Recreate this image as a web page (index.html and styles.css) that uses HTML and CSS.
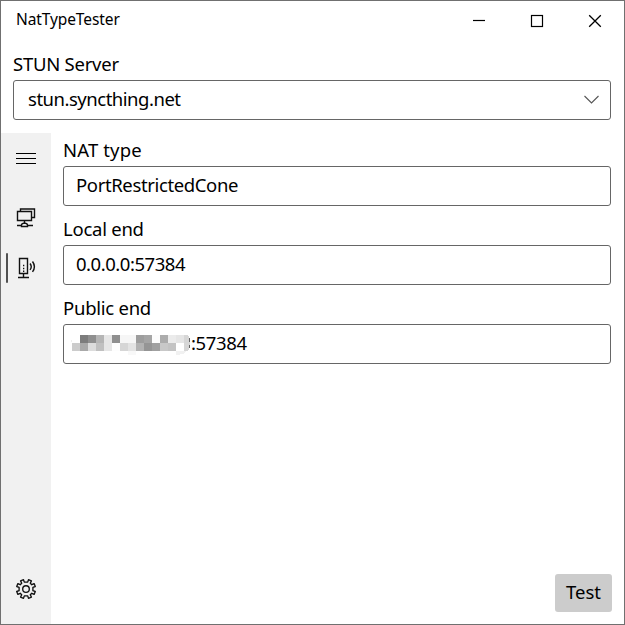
FILE: index.html
```
<!DOCTYPE html>
<html lang="en">
<head>
<meta charset="utf-8">
<title>NatTypeTester</title>
<link rel="stylesheet" href="styles.css">
</head>
<body>
<div class="window">
  <header class="titlebar">
    <span class="title">NatTypeTester</span>
    <svg class="controls" width="174" height="39" viewBox="0 0 174 39" fill="none" stroke="#000">
      <path d="M23 19.5h12" stroke-width="1.2"/>
      <rect x="81.5" y="14.5" width="11" height="11" stroke-width="1.2"/>
      <path d="M139.200 14.200l11.600 11.600M150.800 14.200l-11.600 11.600" stroke-width="1.3"/>
    </svg>
  </header>
  <section class="server">
    <label class="label l-server">STUN Server</label>
    <div class="box combo"><span class="t-server">stun.syncthing.net</span>
      <svg width="16" height="10" viewBox="0 0 16 10" fill="none" stroke="#555" stroke-width="1.1"><path d="M1.500 1l7 7 7-7"/></svg>
    </div>
  </section>
  <div class="body">
    <nav class="rail">
      <div class="item menu"><svg width="20" height="12" viewBox="0 0 20 12" stroke="#000" stroke-width="1.1"><path d="M0 .5h20M0 5.5h20M0 10.5h20"/></svg></div>
      <div class="item">
        <svg width="20" height="20" viewBox="0 0 20 20" fill="none" stroke="#111" stroke-width="1.4"><path d="M4.500 3.500v-2.500h14v8.500h-2.500M1.500 3.500h14v9h-14zM8.500 12.500v2.500M1 17.500h5M12 17.500h5M5.500 17q0-1.500 3-2 3 .5 3 2v1.500h-6z"/></svg>
      </div>
      <div class="item selected">
        <svg width="20" height="22" viewBox="0 0 20 22" fill="none" stroke="#111" stroke-width="1.4"><path d="M3.500 1.500h8v15h-8zM7.500 16.500v4M2 20.500h11M14 6.500q2.500 3.200 0 6.400M16.500 4.500q3.800 5.200 0 10.400"/><path d="M7 8.500h1.300M7 11.500h1.300M7 14.200h1.300"/></svg>
      </div>
      <div class="item settings">
        <svg width="20" height="20" viewBox="0 0 20 20" fill="none" stroke="#111" stroke-width="1.35" stroke-linejoin="round"><path d="M8.300 3.100L7.500.7 4.600 1.900 5.700 4.200 4.200 5.700 1.900 4.600.7 7.500 3.100 8.300v3.400L.7 12.500l1.200 2.900 2.300-1.100 1.500 1.500-1.100 2.300 2.900 1.200.8-2.400h3.400l.8 2.400 2.900-1.200-1.100-2.300 1.500-1.500 2.300 1.100 1.200-2.900-2.400-.8V8.300l2.400-.8-1.200-2.900-2.300 1.100-1.500-1.500 1.100-2.300L12.500.7l-.8 2.400z"/><circle cx="10" cy="10" r="3.300"/></svg>
      </div>
    </nav>
    <main class="content">
      <label class="label l-nat">NAT type</label>
      <div class="box"><span class="t-nat">PortRestrictedCone</span></div>
      <label class="label l-local">Local end</label>
      <div class="box"><span class="t-local">0.0.0.0:57384</span></div>
      <label class="label l-public">Public end</label>
      <div class="box public">
        <svg class="mosaic" width="120" height="20" viewBox="0 0 120 20" shape-rendering="crispEdges">
          <path fill="#eee" d="M0 5l1-1v3H0z"/>
          <path fill="#7c7c7c" d="M9 0h8v8H9z"/><path fill="#8f8f8f" d="M17 0h8v8h-8zM41 0h8v8h-8z"/><path fill="#b5b5b5" d="M25 0h8v8h-8z"/><path fill="#e6e6e6" d="M33 0h8v16h-8z"/><path fill="#f6f6f6" d="M49 0h16v8H49z"/><path fill="#9d9d9d" d="M65 0h8v8h-8z"/><path fill="#a5a5a5" d="M73 0h8v8h-8z"/><path fill="#fcfcfc" d="M81 0h8v8h-8z"/><path fill="#acacac" d="M89 0h8v8h-8z"/><path fill="#ebebeb" d="M97 0h8v8h-8z"/><path fill="#e5e5e5" d="M105 0h8v8h-8z"/><path fill="#d6d6d6" d="M113 0h4l2 4v8l-2 4h-4z"/>
          <path fill="#ccc" d="M1 8h8v8H1z"/><path fill="#a9a9a9" d="M9 8h8v8H9z"/><path fill="#dcdcdc" d="M17 8h8v8h-8z"/><path fill="#c0c0c0" d="M25 8h8v8h-8z"/><path fill="#fdfdfd" d="M41 8h8v8h-8z"/><path fill="#d6d6d6" d="M49 8h8v8h-8z"/><path fill="#e3e3e3" d="M57 8h8v8h-8z"/><path fill="#b2b2b2" d="M65 8h8v8h-8z"/><path fill="#959595" d="M73 8h8v8h-8z"/><path fill="#a0a0a0" d="M81 8h8v8h-8z"/><path fill="#c8c8c8" d="M89 8h8v8h-8z"/><path fill="#c3c3c3" d="M97 8h8v8h-8z"/>
          <path fill="#f8f8f8" d="M57 16h8v4h-8z"/><path fill="#f1f1f1" d="M105 16h11l-4 3-7 1z"/><path fill="#666" d="M118 3h1v4h-1zM118 10h1v3h-1z"/>
        </svg>
        <span class="t-public">:57384</span>
      </div>
      <button class="test"><span>Test</span></button>
    </main>
  </div>
</div>
</body>
</html>
```

FILE: styles.css
```
* { box-sizing: border-box; }
body { margin: 0; background: #fff; color: #000; font: 18.5px/24px "Noto Sans", "Open Sans", sans-serif; }
.window { width: 625px; height: 625px; border: 1px solid #707070; display: flex; flex-direction: column; overflow: hidden; }
.titlebar { height: 49px; display: flex; justify-content: space-between; align-items: flex-start; padding-left: 15px; }
.title { font-size: 15.5px; line-height: 20px; padding-top: 8px; letter-spacing: -0.1px; }
.controls { margin-right: 0; }
svg { display: block; flex: none; }
.server { height: 83px; padding: 2px 13px 0 12px; }
.label { display: block; width: max-content; height: 28px; white-space: nowrap; }
.box { height: 40px; border: 1px solid #666; border-radius: 3px; display: flex; align-items: center; padding: 0 12px; white-space: nowrap; }
.box > span { position: relative; top: -1px; }
.combo { justify-content: space-between; padding: 0 11px 0 14px; }
.body { flex: 1; display: flex; min-height: 0; }
.rail { width: 50px; background: #f1f1f1; display: flex; flex-direction: column; }
.item { height: 50px; display: flex; align-items: center; justify-content: center; flex: none; }
.menu { height: 60px; padding-bottom: 9px; }
.selected { position: relative; }
.selected::before { content: ""; position: absolute; left: 5px; top: 10px; width: 2px; height: 30px; background: #505050; border-radius: 1px; }
.settings { margin-top: auto; margin-bottom: 10px; }
.content { flex: 1; padding: 5px 13px 12px 12px; display: flex; flex-direction: column; }
.content .box + .label { margin-top: 11px; }
.public { padding-left: 7px; }
.mosaic { margin-top: 2px; }
.test { width: 57px; height: 38px; margin: auto -1px 0 auto; padding: 0 0 2px; border: 0; border-radius: 3px; background: #ccc; color: #000; font: inherit; }
.l-server, .l-local, .l-public { letter-spacing: -0.25px; }
.l-nat { letter-spacing: 0.15px; }
.t-server { letter-spacing: -0.48px; }
.t-nat { letter-spacing: -0.37px; }
.t-local { letter-spacing: -0.46px; }
.t-public { letter-spacing: -0.35px; }
```
